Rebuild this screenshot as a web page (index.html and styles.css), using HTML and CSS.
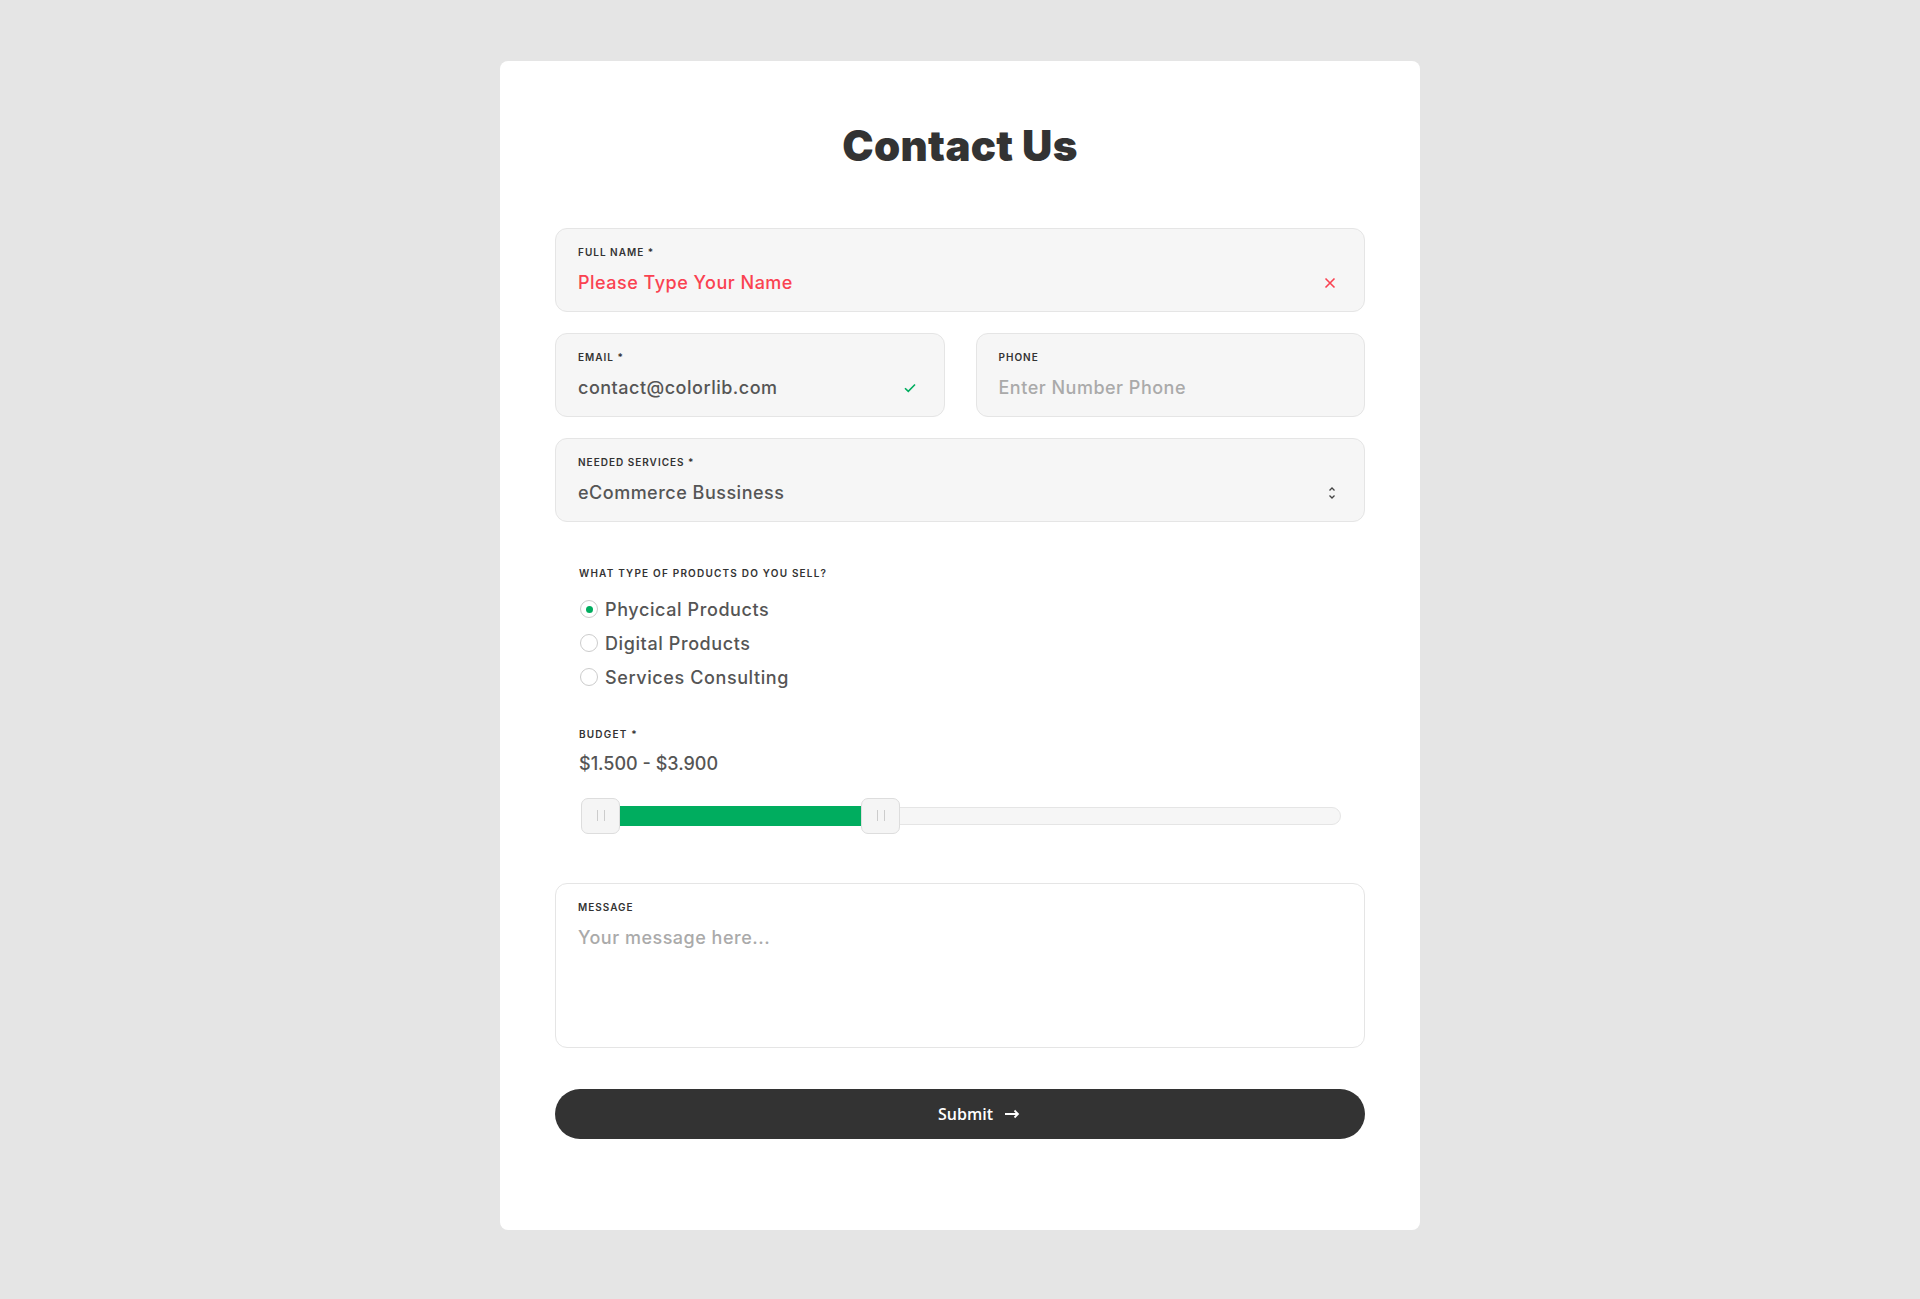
FILE: index.html
```html
<!DOCTYPE html>
<html lang="en">
<head>
    <meta charset="UTF-8">
    <meta name="viewport" content="width=device-width, initial-scale=1.0">
    <title>Contact Us</title>
    <link rel="stylesheet" href="styles.css">
</head>
<body>
<main>
    <form class="contact-card" id="contactForm">
        <h1>Contact Us</h1>

        <div class="field field-error">
            <label for="name">Full name *</label>
            <div class="field-row">
                <input type="text" id="name" name="name" placeholder="Please Type Your Name">
                <svg class="field-icon" width="12" height="12" viewBox="0 0 12 12"><path d="M1.5 1.5l9 9M10.5 1.5l-9 9" stroke="#fa4251" stroke-width="1.6" fill="none"/></svg>
            </div>
        </div>

        <div class="field-group">
            <div class="field">
                <label for="email">Email *</label>
                <div class="field-row">
                    <input type="email" id="email" name="email" value="contact@colorlib.com">
                    <svg class="field-icon" width="12" height="10" viewBox="0 0 12 10"><path d="M1 5.2l3.3 3.2L11 1.5" stroke="#00ad5f" stroke-width="1.6" fill="none"/></svg>
                </div>
            </div>
            <div class="field">
                <label for="phone">Phone</label>
                <div class="field-row">
                    <input type="text" id="phone" name="phone" placeholder="Enter Number Phone">
                </div>
            </div>
        </div>

        <div class="field">
            <label for="services">Needed services *</label>
            <div class="field-row">
                <div class="select-value" id="services">eCommerce Bussiness</div>
                <svg class="field-icon" width="8" height="14" viewBox="0 0 8 14"><path d="M1.5 4.5L4 2l2.5 2.5M1.5 9.5L4 12l2.5-2.5" stroke="#444" stroke-width="1.3" fill="none"/></svg>
            </div>
        </div>

        <div class="section radios">
            <div class="section-label">What type of products do you sell?</div>
            <label class="radio"><span class="radio-dot checked"></span>Phycical Products</label>
            <label class="radio"><span class="radio-dot"></span>Digital Products</label>
            <label class="radio"><span class="radio-dot"></span>Services Consulting</label>
        </div>

        <div class="section budget">
            <div class="section-label">Budget *</div>
            <div class="budget-value">$1.500 - $3.900</div>
            <div class="slider">
                <div class="slider-track"></div>
                <div class="slider-fill" style="left: 30px; width: 256px;"></div>
                <div class="slider-handle" style="left: 0;"></div>
                <div class="slider-handle" style="left: 280px;"></div>
            </div>
        </div>

        <div class="field field-message">
            <label for="message">Message</label>
            <textarea id="message" name="message" placeholder="Your message here..."></textarea>
        </div>

        <button type="submit" class="btn">Submit
            <svg class="arrow" width="15" height="10" viewBox="0 0 15 10"><path d="M0 5h13M9.5 1.5L13 5l-3.5 3.5" stroke="#fff" stroke-width="1.8" fill="none"/></svg>
        </button>
    </form>
</main>
</body>
</html>
```

FILE: styles.css
```css
:root {
    --bg: #e5e5e5;
    --card: #fff;
    --input: #f6f6f6;
    --border: #e5e5e5;
    --text: #555;
    --dark: #333;
    --green: #00ad5f;
    --red: #fa4251;
}
body {
    background: var(--bg);
    font-family: Inter, 'Noto Sans', sans-serif;
    margin: 0;
    min-height: 100vh;
}
main {
    padding: 61px 0 70px;
}
.contact-card {
    background: var(--card);
    border-radius: 8px;
    width: 920px;
    box-sizing: border-box;
    margin: 0 auto;
    padding: 61px 55px 91px;
    display: flex;
    flex-direction: column;
}
h1 {
    text-align: center;
    color: var(--dark);
    font-size: 42px;
    line-height: 48px;
    font-weight: 900;
    margin: 0 0 58px;
    letter-spacing: 0.3px;
}
.field {
    height: 84px;
    box-sizing: border-box;
    background: var(--input);
    border: 1px solid var(--border);
    border-radius: 12px;
    padding: 17px 22px 0;
    margin-bottom: 21px;
}
.field label, .section-label {
    display: block;
    font-size: 10px;
    line-height: 12px;
    font-weight: 600;
    text-transform: uppercase;
    letter-spacing: 1px;
    color: var(--dark);
}
.section-label {
    letter-spacing: 1.2px;
}
.field-row {
    display: flex;
    align-items: center;
    margin-top: 13px;
    height: 24px;
}
.field input, .select-value, .field textarea {
    flex: 1;
    border: none;
    background: transparent;
    outline: none;
    padding: 0;
    margin: 0;
    font-family: inherit;
    font-size: 18px;
    letter-spacing: 0.5px;
    font-weight: 500;
    color: var(--text);
    line-height: 24px;
    height: 24px;
}
.field input::placeholder, .field textarea::placeholder {
    color: #aaa;
}
.field-error input::placeholder {
    color: var(--red);
}
.field-icon {
    flex: none;
    margin-right: 6px;
}
.field-group {
    display: grid;
    grid-template-columns: 1fr 1fr;
    gap: 31px;
}
.section {
    padding: 0 24px;
}
.radios {
    margin-top: 24px;
}
.radios .section-label {
    margin-bottom: 13px;
}
.radio {
    display: flex;
    align-items: center;
    height: 34px;
    font-size: 18px;
    letter-spacing: 0.6px;
    font-weight: 500;
    color: var(--text);
    cursor: pointer;
}
.radio-dot {
    width: 18px;
    height: 18px;
    box-sizing: border-box;
    border: 1px solid #ccc;
    border-radius: 50%;
    background: #fff;
    margin: 0 7px 0 1px;
    display: flex;
    align-items: center;
    justify-content: center;
}
.radio-dot.checked::after {
    content: "";
    width: 7px;
    height: 7px;
    border-radius: 50%;
    background: var(--green);
}
.budget {
    margin-top: 34px;
}
.budget-value {
    margin-top: 12px;
    font-size: 18px;
    font-weight: 500;
    line-height: 24px;
    color: var(--text);
}
.slider {
    position: relative;
    height: 36px;
    margin: 22px 0 0 2px;
}
.slider-track {
    position: absolute;
    left: 0;
    right: 0;
    top: 9px;
    height: 18px;
    box-sizing: border-box;
    background: var(--input);
    border: 1px solid var(--border);
    border-radius: 9px;
}
.slider-fill {
    position: absolute;
    top: 8px;
    height: 20px;
    background: var(--green);
}
.slider-handle {
    position: absolute;
    top: 0;
    width: 39px;
    height: 36px;
    box-sizing: border-box;
    background: #f5f5f5;
    border: 1px solid #ddd;
    border-radius: 7px;
}
.slider-handle::before, .slider-handle::after {
    content: "";
    position: absolute;
    top: 11px;
    width: 1px;
    height: 11px;
    background: #ccc;
}
.slider-handle::before { left: 15px; }
.slider-handle::after { left: 22px; }
.field-message {
    height: 165px;
    background: #fff;
    margin: 49px 0 0;
}
.field-message textarea {
    display: block;
    width: 100%;
    height: 100px;
    margin-top: 13px;
    resize: none;
}
.btn {
    margin-top: 41px;
    height: 50px;
    border: none;
    border-radius: 25px;
    background: var(--dark);
    color: #fff;
    font-family: 'Open Sans', sans-serif;
    font-size: 16px;
    font-weight: 600;
    padding: 0 0 0 38px;
    display: flex;
    align-items: center;
    justify-content: center;
    gap: 12px;
    cursor: pointer;
}
```
